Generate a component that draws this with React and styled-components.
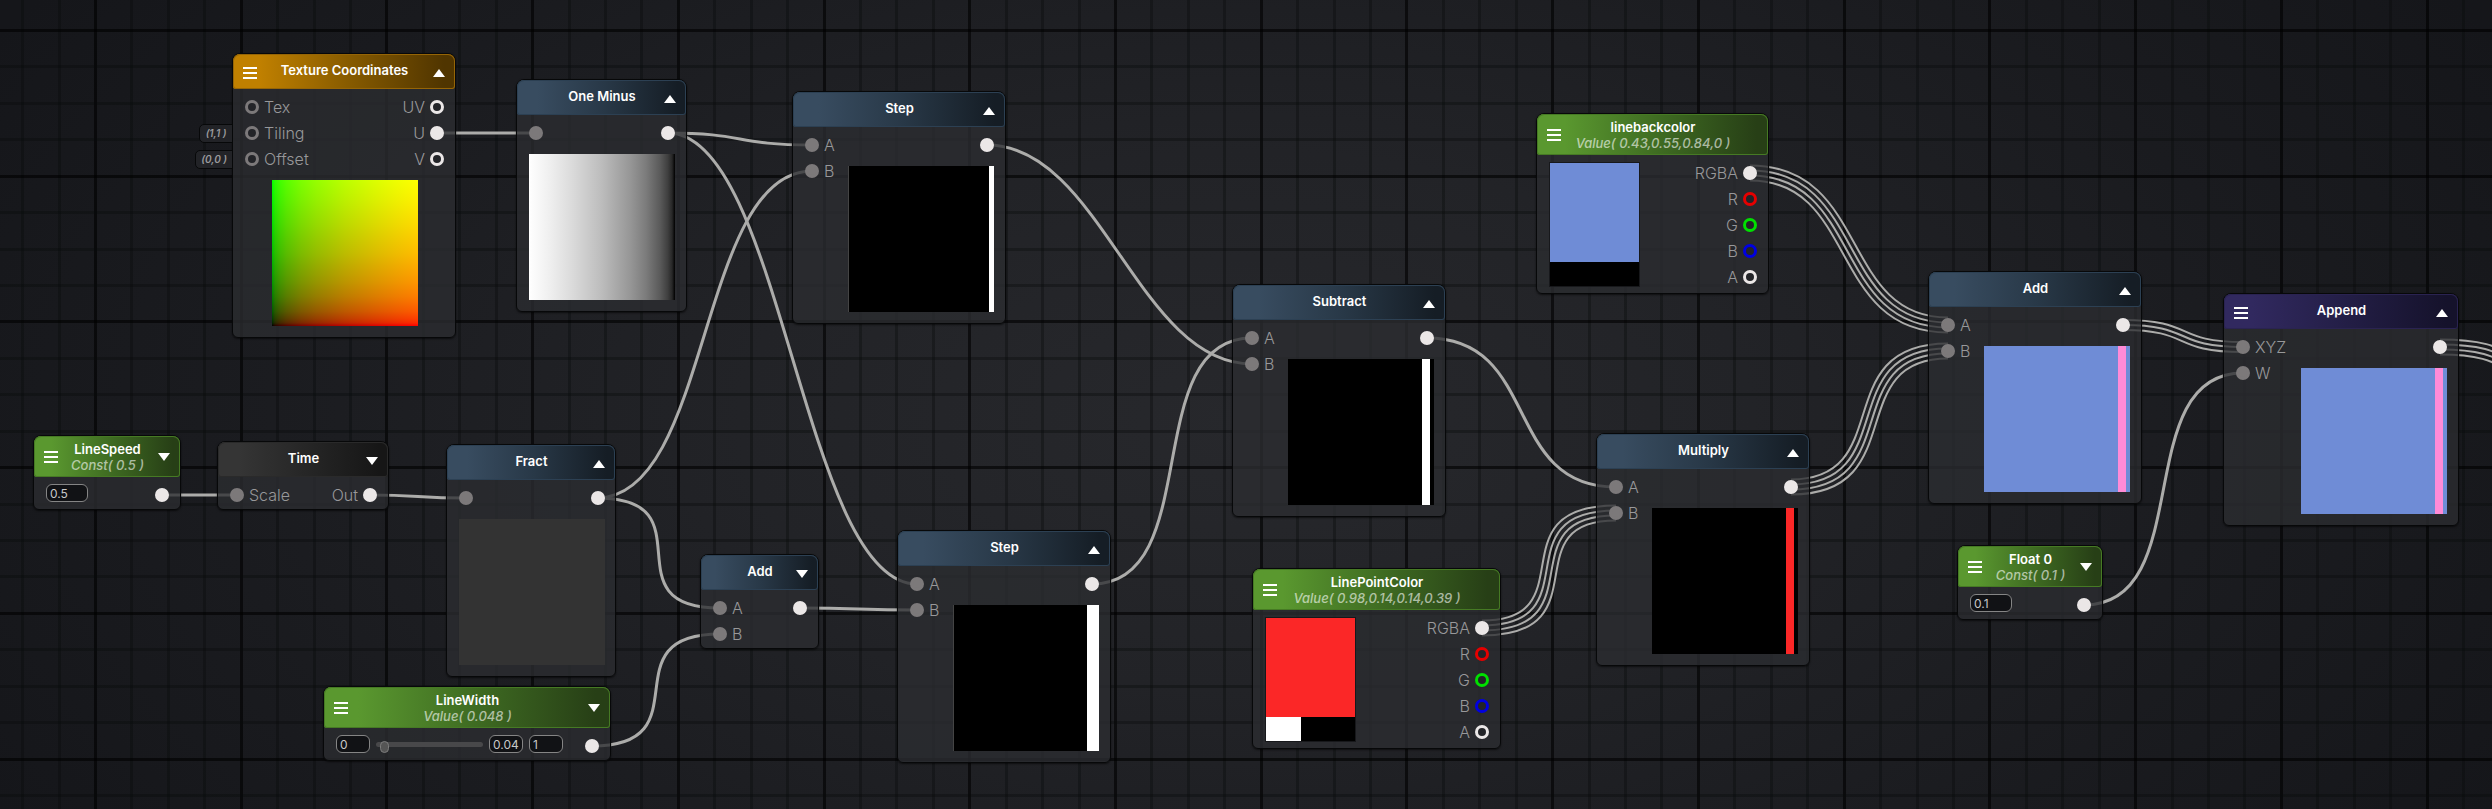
import React, { useState } from "react";
import styled, { createGlobalStyle, css } from "styled-components";

const GlobalStyle = createGlobalStyle`
  *, *::before, *::after { box-sizing: border-box; }
  body {
    margin: 0;
    background: #15161a;
    font-family: Inter, "Liberation Sans", sans-serif;
  }
  h2, p { margin: 0; }
  button, input { font: inherit; color: inherit; }
`;

/* ---------- tones ---------- */

const tones = {
  blue: { from: "#384c60", mid: "#283847", to: "#151d25", edge: "#2c4053" },
  amber: { from: "#c08000", mid: "#875b00", to: "#503500", edge: "#966506" },
  green: { from: "#5a982f", mid: "#3f6c22", to: "#273f16", edge: "#467a24" },
  grey: { from: "#353535", mid: "#262626", to: "#161616", edge: "#2a2a2a" },
  violet: { from: "#31295f", mid: "#231e46", to: "#15122b", edge: "#2a2351" },
};

const portColors = {
  in: "#7c797a",
  out: "#ebe7e7",
  red: "#e60000",
  green: "#00e000",
  blue: "#0000e0",
};

/* ---------- canvas ---------- */

const Canvas = styled.main`
  position: relative;
  min-height: 100vh;
  overflow: hidden;
  background: radial-gradient(ellipse 58% 95% at 50% 52%, #27282c 0%, #222327 35%, #1a1b1f 72%, #15161a 100%);
`;

const Backdrop = styled.svg`
  position: absolute;
  inset: 0;
  width: 100%;
  height: 100%;
`;

/* ---------- node ---------- */

const NodeBox = styled.article`
  position: absolute;
  left: ${(p) => p.$x}px;
  top: ${(p) => p.$y}px;
  width: ${(p) => p.$w}px;
  border: 1px solid #070809;
  border-radius: 8px 8px 6px 6px;
  background: rgba(44, 45, 49, 0.78);
  box-shadow: 0 1px 2px rgba(0, 0, 0, 0.6);
`;

const Header = styled.header`
  display: grid;
  grid-template-columns: 14px 1fr 14px;
  align-items: center;
  height: ${(p) => (p.$tall ? 41 : 35)}px;
  padding: ${(p) => (p.$tall ? "0 9px 0 10px" : "2px 9px 0 10px")};
  border-radius: 7px 7px 3px 3px;
  ${({ $tone }) => css`
    background: linear-gradient(to right, ${$tone.from} 12%, ${$tone.mid} 52%, ${$tone.to} 95%);
    box-shadow: inset 0 0 0 1px ${$tone.edge};
  `}
`;

const Heading = styled.div`
  grid-column: 2;
  padding-bottom: ${(p) => (p.$tall ? 0 : 5)}px;
  text-align: center;
  white-space: nowrap;
`;

const Title = styled.h2`
  font-size: 13px;
  line-height: 16px;
  font-weight: 600;
  color: #fff;
`;

const Subtitle = styled.p`
  font-size: 13px;
  line-height: 16px;
  font-weight: 500;
  font-style: italic;
  color: rgba(255, 255, 255, 0.6);
`;

const IconButton = styled.button`
  grid-column: ${(p) => p.$column};
  display: flex;
  align-items: center;
  justify-content: center;
  width: 14px;
  height: 14px;
  padding: 0;
  border: 0;
  background: none;
  color: #fff;
  cursor: pointer;
`;

const Body = styled.div`
  display: grid;
  grid-template-columns: auto 1fr;
  padding: 5px 11px 1px 12px;
`;

/* ---------- ports ---------- */

const PortList = styled.div`
  grid-column: ${(p) => (p.$side === "out" ? 2 : 1)};
  grid-row: ${(p) => (p.$span ? "1 / span 2" : "1")};
  justify-self: ${(p) => (p.$side === "out" ? "end" : "start")};
  align-self: start;
  display: flex;
  flex-direction: column;
`;

const PortRow = styled.div`
  position: relative;
  display: flex;
  flex-direction: ${(p) => (p.$side === "out" ? "row-reverse" : "row")};
  align-items: center;
  gap: 5px;
  height: 26px;
  font-size: 16px;
  line-height: 20px;
  font-weight: 300;
  color: #98989a;
  white-space: nowrap;
`;

const PortDot = styled.span`
  width: 14px;
  height: 14px;
  border: 3px solid ${(p) => p.$color};
  border-radius: 50%;
  background: ${(p) => (p.$wired ? p.$color : "#232428")};
`;

const Badge = styled.span`
  position: absolute;
  right: calc(100% + 12px);
  min-width: 34px;
  height: 19px;
  padding: 0 5px;
  border: 1px solid #070809;
  border-radius: 5px 0 0 5px;
  background: #222327;
  font-size: 10px;
  line-height: 17px;
  font-weight: 600;
  font-style: italic;
  text-align: center;
  color: #9a9a9c;
`;

/* ---------- fields ---------- */

const Controls = styled.div`
  display: flex;
  align-items: center;
  gap: 6px;
  height: 26px;
  padding-bottom: 4px;
`;

const NumberField = styled.input`
  width: ${(p) => (p.$wide ? 42 : 34)}px;
  height: 18px;
  padding: 0 3px;
  border: 1px solid #858585;
  border-radius: 6px;
  outline: 0;
  background: #111215;
  font-size: 12px;
  color: #c8c8c8;
`;

const Slider = styled.input`
  appearance: none;
  width: 107px;
  height: 12px;
  margin: 0;
  background: none;

  &::-webkit-slider-runnable-track {
    height: 5px;
    border-radius: 3px;
    background: #48484a;
  }
  &::-webkit-slider-thumb {
    appearance: none;
    width: 9px;
    height: 12px;
    margin-top: -1px;
    border: 1px solid #7c7c7c;
    border-radius: 5px;
    background: #555;
  }
`;

/* ---------- previews ---------- */

const ramp = (hex) =>
  [[0, 0], [2, 39], [5, 63], [10, 89], [20, 124], [30, 149], [50, 188], [70, 218], [85, 238], [100, 255]]
    .map(([at, v]) => `${hex(v)} ${at}%`)
    .join(", ");

const band = (base, color, from, to) =>
  `linear-gradient(to right, ${base} ${from}px, ${color} ${from}px ${to}px, ${base} ${to}px)`;

const fills = {
  uv: `linear-gradient(to right, ${ramp((v) => `rgb(${v},0,0)`)}), linear-gradient(to top, ${ramp((v) => `rgb(0,${v},0)`)})`,
  inverse: `linear-gradient(to left, ${ramp((v) => `rgb(${v},${v},${v})`)})`,
  flat: "#333",
  thinStep: "linear-gradient(to right, #444 1px, #000 1px 141px, #fff 141px)",
  wideStep: "linear-gradient(to right, #444 1px, #000 1px 134px, #fff 134px)",
  whiteBand: band("#000", "#fff", 134, 142),
  redBand: band("#000", "#fb2727", 134, 142),
  pinkBand: band("#6f8cd6", "#ff8bd7", 134, 142),
};

const Preview = styled.div`
  grid-row: 2;
  grid-column: ${(p) => (p.$beside ? "2" : "1 / -1")};
  justify-self: ${(p) => (p.$beside ? "end" : "center")};
  width: 146px;
  height: 146px;
  margin: 8px 0 10px;
  background: ${(p) => fills[p.$fill]};
  background-blend-mode: screen;
`;

const Swatch = styled.div`
  display: flex;
  flex-direction: column;
  width: 91px;
  height: 125px;
  margin: 2px 0 5px;
  border: 1px solid #17181b;
  background: ${(p) => p.$color};
`;

const AlphaBar = styled.div`
  height: 24px;
  margin-top: auto;
  background: linear-gradient(to right, #fff ${(p) => p.$alpha}%, #000 ${(p) => p.$alpha}%);
`;

/* ---------- node content ---------- */

const plain = [{ label: "", wired: true }];
const ab = [{ label: "A", wired: true }, { label: "B", wired: true }];
const colorOutputs = [
  { label: "RGBA", wired: true },
  { label: "R", color: "red" },
  { label: "G", color: "green" },
  { label: "B", color: "blue" },
  { label: "A" },
];

const nodes = [
  {
    id: "uv", x: 232, y: 53, w: 224, tone: "amber", title: "Texture Coordinates", menu: true, open: true, fill: "uv",
    inputs: [{ label: "Tex" }, { label: "Tiling", badge: "(1,1 )" }, { label: "Offset", badge: "(0,0 )" }],
    outputs: [{ label: "UV" }, { label: "U", wired: true }, { label: "V" }],
  },
  { id: "minus", x: 516, y: 79, w: 171, tone: "blue", title: "One Minus", open: true, fill: "inverse", inputs: plain, outputs: plain },
  { id: "step1", x: 792, y: 91, w: 214, tone: "blue", title: "Step", open: true, fill: "thinStep", beside: true, inputs: ab, outputs: plain },
  { id: "speed", x: 33, y: 435, w: 148, tone: "green", title: "LineSpeed", subtitle: "Const( 0.5 )", menu: true, value: "0.5", outputs: plain },
  {
    id: "time", x: 217, y: 441, w: 172, tone: "grey", title: "Time",
    inputs: [{ label: "Scale", wired: true }], outputs: [{ label: "Out", wired: true }],
  },
  { id: "fract", x: 446, y: 444, w: 170, tone: "blue", title: "Fract", open: true, fill: "flat", inputs: plain, outputs: plain },
  { id: "add1", x: 700, y: 554, w: 119, tone: "blue", title: "Add", inputs: ab, outputs: plain },
  {
    id: "width", x: 323, y: 686, w: 288, tone: "green", title: "LineWidth", subtitle: "Value( 0.048 )", menu: true,
    range: { min: "0", value: "0.04", max: "1" }, outputs: plain,
  },
  { id: "step2", x: 897, y: 530, w: 214, tone: "blue", title: "Step", open: true, fill: "wideStep", beside: true, inputs: ab, outputs: plain },
  { id: "sub", x: 1232, y: 284, w: 214, tone: "blue", title: "Subtract", open: true, fill: "whiteBand", beside: true, inputs: ab, outputs: plain },
  {
    id: "point", x: 1252, y: 568, w: 249, tone: "green", title: "LinePointColor", subtitle: "Value( 0.98,0.14,0.14,0.39 )",
    menu: true, fixed: true, swatch: "#fb2727", alpha: 39, outputs: colorOutputs,
  },
  {
    id: "back", x: 1536, y: 113, w: 233, tone: "green", title: "linebackcolor", subtitle: "Value( 0.43,0.55,0.84,0 )",
    menu: true, fixed: true, swatch: "#6f8cd6", alpha: 0, outputs: colorOutputs,
  },
  { id: "mul", x: 1596, y: 433, w: 214, tone: "blue", title: "Multiply", open: true, fill: "redBand", beside: true, inputs: ab, outputs: plain },
  { id: "add2", x: 1928, y: 271, w: 214, tone: "blue", title: "Add", open: true, fill: "pinkBand", beside: true, inputs: ab, outputs: plain },
  {
    id: "append", x: 2223, y: 293, w: 236, tone: "violet", title: "Append", menu: true, open: true, fill: "pinkBand", beside: true,
    inputs: [{ label: "XYZ", wired: true }, { label: "W", wired: true }], outputs: plain,
  },
  { id: "float", x: 1957, y: 545, w: 146, tone: "green", title: "Float 0", subtitle: "Const( 0.1 )", menu: true, value: "0.1", outputs: plain },
];

/* ---------- wires ---------- */

const byId = Object.fromEntries(nodes.map((n) => [n.id, n]));

const portY = (node, index) => node.y + (node.subtitle ? 60 : 54) + index * 26;
const outPoint = (id, index = 0) => [byId[id].x + byId[id].w - 19, portY(byId[id], index)];
const inPoint = (id, index = 0) => [byId[id].x + 20, portY(byId[id], index)];

const links = [
  { from: outPoint("uv", 1), to: inPoint("minus") },
  { from: outPoint("minus"), to: inPoint("step1") },
  { from: outPoint("minus"), to: inPoint("step2") },
  { from: outPoint("speed"), to: inPoint("time") },
  { from: outPoint("time"), to: inPoint("fract") },
  { from: outPoint("fract"), to: inPoint("step1", 1) },
  { from: outPoint("fract"), to: inPoint("add1") },
  { from: outPoint("width"), to: inPoint("add1", 1) },
  { from: outPoint("add1"), to: inPoint("step2", 1) },
  { from: outPoint("step1"), to: inPoint("sub", 1) },
  { from: outPoint("step2"), to: inPoint("sub") },
  { from: outPoint("sub"), to: inPoint("mul") },
  { from: outPoint("point"), to: inPoint("mul", 1), lanes: 4 },
  { from: outPoint("back"), to: inPoint("add2"), lanes: 4 },
  { from: outPoint("mul"), to: inPoint("add2", 1), lanes: 4 },
  { from: outPoint("add2"), to: inPoint("append"), lanes: 3 },
  { from: outPoint("float"), to: inPoint("append", 1) },
  { from: outPoint("append"), to: [2576, 376], lanes: 4 },
];

const MAX_HANDLE = 114;
const LANE_GAP = 5;

/* One lane of a wire; the handles lean sideways so that lanes stay parallel through the bend. */
function lanePath([x0, y0], [x1, y1], offset) {
  const dx = x1 - x0;
  const dy = y1 - y0;
  const handle = Math.min(MAX_HANDLE, (dx + Math.abs(dy)) / 2);
  const bend = Math.atan2(dy, dx - handle);
  const lean = (-4 / 3) * Math.tan(bend / 2) * offset;
  return `M${x0} ${y0 + offset} C${x0 + handle + lean} ${y0 + offset} ${x1 - handle + lean} ${y1 + offset} ${x1} ${y1 + offset}`;
}

function Wire({ from, to, lanes = 1 }) {
  const offsets = Array.from({ length: lanes }, (_, i) => (i - (lanes - 1) / 2) * LANE_GAP);
  return offsets.map((offset) => (
    <path key={offset} d={lanePath(from, to, offset)} fill="none" stroke="#acacaa" strokeWidth={lanes > 1 ? 2 : 3} />
  ));
}

/* ---------- grid ---------- */

const gridStops = (origin, count) =>
  Array.from({ length: count }, (_, i) => ({ at: Math.round(origin + (i - 4) * 36.43), major: i % 4 === 0 }));

const columns = gridStops(95, 110);
const rows = gridStops(30, 60);

const lineColor = (major) => (major ? "rgba(0, 0, 0, 0.6)" : "rgba(8, 12, 10, 0.36)");

function Grid() {
  return (
    <g>
      {columns.map(({ at, major }) => (
        <rect key={`c${at}`} x={at - 1} y="0" width="3" height="100%" fill={lineColor(major)} />
      ))}
      {rows.map(({ at, major }) => (
        <rect key={`r${at}`} x="0" y={at - 1} width="100%" height="3" fill={lineColor(major)} />
      ))}
    </g>
  );
}

/* ---------- icons ---------- */

const MenuIcon = () => (
  <svg width="14" height="12" viewBox="0 0 14 12" fill="currentColor" aria-hidden="true">
    <rect width="14" height="2" />
    <rect y="5" width="14" height="2" />
    <rect y="10" width="14" height="2" />
  </svg>
);

const ArrowIcon = ({ up }) => (
  <svg width="12" height="8" viewBox="0 0 12 8" fill="currentColor" aria-hidden="true">
    <path d={up ? "M6 0 12 8H0Z" : "M0 0H12L6 8Z"} />
  </svg>
);

/* ---------- parts ---------- */

function Ports({ side, ports, span }) {
  return (
    <PortList $side={side} $span={span}>
      {ports.map(({ label, wired, color, badge }, i) => (
        <PortRow key={i} $side={side}>
          {badge && <Badge>{badge}</Badge>}
          <PortDot $color={portColors[color || side]} $wired={wired} />
          {label && <span>{label}</span>}
        </PortRow>
      ))}
    </PortList>
  );
}

function ValueControl({ name, initial }) {
  const [value, setValue] = useState(initial);
  return (
    <Controls>
      <NumberField $wide aria-label={`${name} value`} value={value} onChange={(e) => setValue(e.target.value)} />
    </Controls>
  );
}

function RangeControl({ name, range }) {
  const [min, setMin] = useState(range.min);
  const [max, setMax] = useState(range.max);
  const [value, setValue] = useState(range.value);
  return (
    <Controls>
      <NumberField aria-label={`${name} minimum`} value={min} onChange={(e) => setMin(e.target.value)} />
      <Slider
        type="range"
        aria-label={name}
        min={min}
        max={max}
        step="0.01"
        value={value}
        onChange={(e) => setValue(e.target.value)}
      />
      <NumberField aria-label={`${name} value`} value={value} onChange={(e) => setValue(e.target.value)} />
      <NumberField aria-label={`${name} maximum`} value={max} onChange={(e) => setMax(e.target.value)} />
    </Controls>
  );
}

function GraphNode({ node }) {
  const tall = Boolean(node.subtitle);
  return (
    <NodeBox $x={node.x} $y={node.y} $w={node.w} aria-labelledby={`title-${node.id}`}>
      <Header $tone={tones[node.tone]} $tall={tall}>
        {node.menu && (
          <IconButton type="button" $column={1} aria-label={`${node.title} menu`}>
            <MenuIcon />
          </IconButton>
        )}
        <Heading $tall={tall}>
          <Title id={`title-${node.id}`}>{node.title}</Title>
          {node.subtitle && <Subtitle>{node.subtitle}</Subtitle>}
        </Heading>
        {!node.fixed && (
          <IconButton type="button" $column={3} aria-label={`${node.title} preview`} aria-expanded={Boolean(node.open)}>
            <ArrowIcon up={node.open} />
          </IconButton>
        )}
      </Header>
      <Body>
        {node.inputs && <Ports side="in" ports={node.inputs} span={node.beside} />}
        {node.value && <ValueControl name={node.title} initial={node.value} />}
        {node.range && <RangeControl name={node.title} range={node.range} />}
        {node.swatch && (
          <Swatch $color={node.swatch}>
            <AlphaBar $alpha={node.alpha} />
          </Swatch>
        )}
        <Ports side="out" ports={node.outputs} />
        {node.fill && <Preview $fill={node.fill} $beside={node.beside} />}
      </Body>
    </NodeBox>
  );
}

export default function App() {
  return (
    <>
      <GlobalStyle />
      <Canvas>
        <Backdrop aria-hidden="true">
          <Grid />
          {links.map((link, i) => (
            <Wire key={i} {...link} />
          ))}
        </Backdrop>
        {nodes.map((node) => (
          <GraphNode key={node.id} node={node} />
        ))}
      </Canvas>
    </>
  );
}
